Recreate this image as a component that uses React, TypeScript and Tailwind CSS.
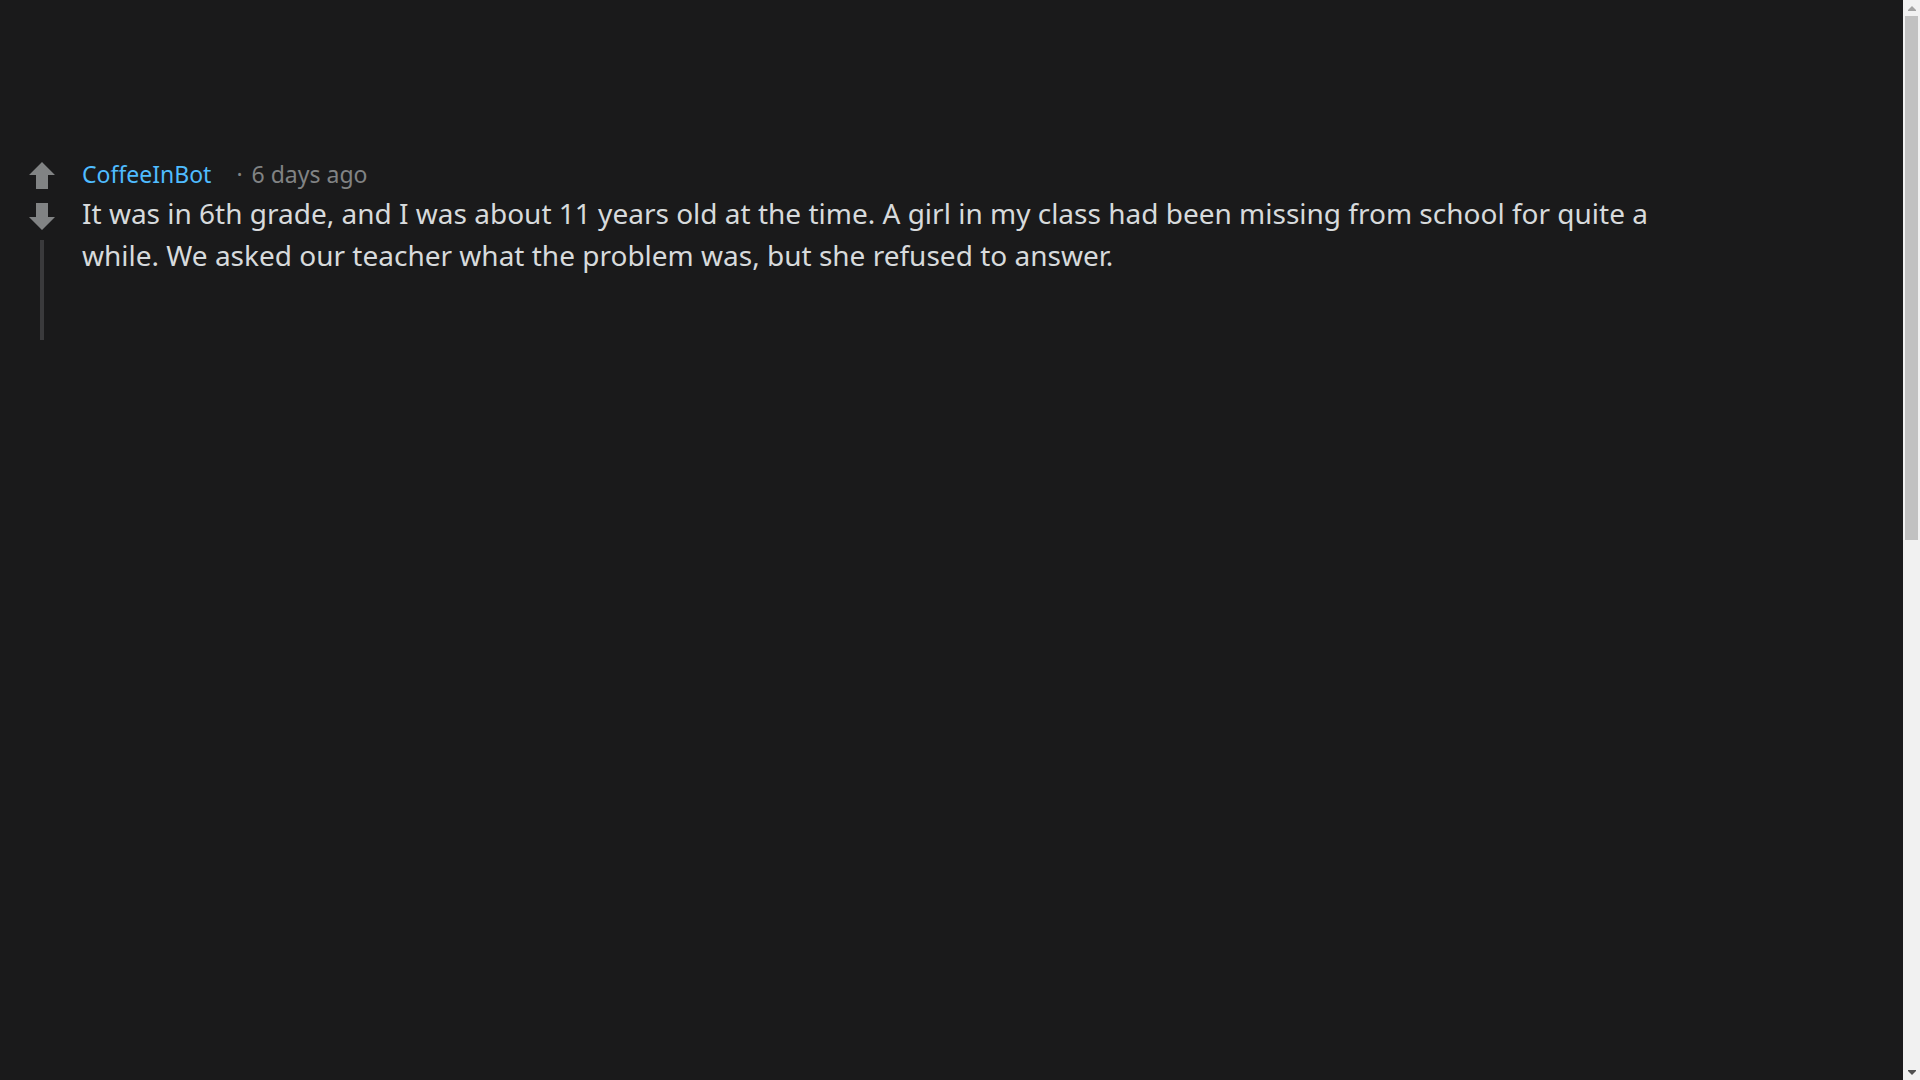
import React from "react";

function UpArrow() {
  return (
    <svg width="26" height="27" viewBox="0 0 26 27" className="block">
      <path d="M13 0 L26 13 L19 13 L19 27 L7 27 L7 13 L0 13 Z" fill="#818384" />
    </svg>
  );
}

function DownArrow() {
  return (
    <svg width="26" height="27" viewBox="0 0 26 27" className="block">
      <path d="M13 27 L26 14 L19 14 L19 0 L7 0 L7 14 L0 14 Z" fill="#818384" />
    </svg>
  );
}

function Scrollbar() {
  return (
    <div className="flex h-[1080px] w-[17px] shrink-0 flex-col bg-[#f1f1f1]">
      <div className="flex h-[16px] items-center justify-center">
        <svg width="8" height="5" viewBox="0 0 8 5" className="block">
          <path d="M4 0 L8 4 L8 5 L0 5 L0 4 Z" fill="#a3a3a3" />
        </svg>
      </div>
      <div className="mx-[2px] h-[524px] bg-[#c1c1c1]" />
      <div className="flex-1" />
      <div className="flex h-[16px] items-center justify-center">
        <svg width="8" height="5" viewBox="0 0 8 5" className="block">
          <path d="M0 0 L8 0 L8 1 L4 5 L0 1 Z" fill="#505050" />
        </svg>
      </div>
    </div>
  );
}

export default function App() {
  return (
    <div
      className="flex h-[1080px] w-full overflow-hidden bg-[#1a1a1b]"
      style={{ fontFamily: '"Noto Sans", "Open Sans", sans-serif' }}
    >
      <div className="flex-1">
        <div className="flex pt-[162px] pl-[29px]">
          <div className="flex w-[26px] flex-col items-center">
            <UpArrow />
            <div className="mt-[14px]">
              <DownArrow />
            </div>
            <div className="mt-[10px] h-[100px] w-[4px] bg-[#3a3a3c]" />
          </div>
          <div className="ml-[27px] w-[1600px]">
            <div className="-mt-[4px] flex items-baseline text-[23px] leading-[32px]">
              <span className="text-[#4fbcff]">CoffeeInBot</span>
              <span className="ml-[25px] text-[#818384]">·</span>
              <span className="ml-[9px] text-[#818384]">6 days ago</span>
            </div>
            <p className="mt-[2px] text-[28px] leading-[42px] text-[#d7dadc]">
              It was in 6th grade, and I was about 11 years old at the time. A girl in my class had been missing from school for quite a while. We asked our teacher what the problem was, but she refused to answer.
            </p>
          </div>
        </div>
      </div>
      <Scrollbar />
    </div>
  );
}
